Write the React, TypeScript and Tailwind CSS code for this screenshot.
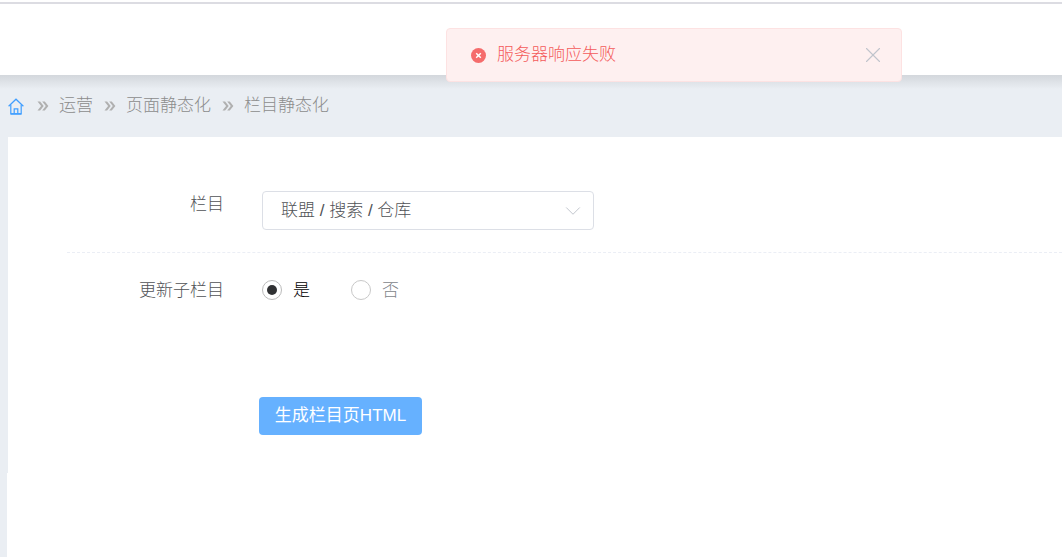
import { ChevronDown, X } from "lucide-react";

const FONT = "font-['Liberation_Sans','Noto_Sans_CJK_SC',sans-serif]";

function HomeIcon() {
  return (
    <svg className="w-[16px] h-[17px] text-[#409eff]" viewBox="0 0 16 17" fill="none" stroke="currentColor" strokeWidth={1.2}>
      <path d="M0.6 8.2 8 1.2l7.4 7" />
      <path d="M2.8 6.8v9h10.4v-9" />
      <path d="M6.2 15.5v-4.7h3.6v4.7" />
      <path d="M2.8 15.9h10.4" strokeWidth={1.4} />
    </svg>
  );
}

function Sep() {
  return (
    <svg className="block w-[12px] h-[10px] text-[#b0b0b0]" viewBox="0 0 12 10" fill="currentColor">
      <path d="M0.5 0.5h2.6L6.7 5 3.1 9.5H0.5L4.1 5z" />
      <path d="M5.2 0.5h2.6L11.4 5 7.8 9.5H5.2L8.8 5z" />
    </svg>
  );
}

function Toast() {
  return (
    <div className="absolute left-[446px] top-[28px] w-[456px] h-[54px] flex items-center pl-[24px] pr-[20px] bg-[#fef0f0] border border-[#fde2e2] rounded-[4px]">
      <svg className="w-[15px] h-[15px] shrink-0" viewBox="0 0 15 15">
        <circle cx="7.5" cy="7.5" r="7.5" fill="#f56c6c" />
        <path d="M5.2 5.2l4.6 4.6M9.8 5.2l-4.6 4.6" stroke="#fff" strokeWidth={1.5} />
      </svg>
      <span className="ml-[11px] text-[17px] font-light text-[#f45a5a]">服务器响应失败</span>
      <X className="ml-auto w-[26px] h-[26px] -mr-[5px] text-[#c0c4cc]" strokeWidth={1} />
    </div>
  );
}

export default function App() {
  return (
    <div className={`${FONT} relative h-[557px] w-[1062px] overflow-hidden flex flex-col bg-[#eaeef3]`}>
      {/* top header */}
      <div className="h-[75px] shrink-0 bg-white pt-[2px]">
        <div className="h-[2px] bg-[#dcdce2]" />
      </div>
      <div className="h-[14px] -mb-[14px] bg-gradient-to-b from-[#d3d7dc] to-[#eaeef3]" />

      {/* breadcrumb */}
      <div className="h-[62px] shrink-0 flex items-center pl-[8px] text-[17px] font-light text-[#8c8c8c] relative">
        <HomeIcon />
        <span className="ml-[13px]"><Sep /></span>
        <span className="ml-[10px]">运营</span>
        <span className="ml-[11px]"><Sep /></span>
        <span className="ml-[10px]">页面静态化</span>
        <span className="ml-[11px]"><Sep /></span>
        <span className="ml-[10px]">栏目静态化</span>
      </div>

      {/* form card */}
      <div className="ml-[8px] h-[336px] shrink-0 bg-white pt-[54px] font-light">
        <div className="flex items-start h-[62px] border-b border-dashed border-[#ebeef5] ml-[59px]">
          <label className="w-[157px] text-right text-[17px] text-[#505256] leading-[28px]">栏目</label>
          <div className="ml-[38px] w-[332px] h-[39px] flex items-center justify-between pl-[18px] pr-[7px] border border-[#dcdfe6] rounded-[4px] text-[17px] text-[#505256]">
            <span>联盟 / 搜索 / 仓库</span>
            <ChevronDown className="w-[26px] h-[26px] text-[#c0c4cc]" strokeWidth={0.9} />
          </div>
        </div>

        <div className="flex items-center h-[74px] ml-[59px]">
          <label className="w-[157px] text-right text-[17px] text-[#505256] leading-[28px] translate-y-px">更新子栏目</label>
          <div className="ml-[38px] flex items-center">
            <span className="w-[20px] h-[20px] rounded-full border border-[#bbbbbb] flex items-center justify-center">
              <span className="w-[10px] h-[10px] rounded-full bg-[#303133]" />
            </span>
            <span className="ml-[11px] text-[17px] text-black translate-y-px">是</span>
            <span className="ml-[41px] w-[20px] h-[20px] rounded-full border border-[#c8c8c8]" />
            <span className="ml-[11px] text-[17px] text-[#82858a] translate-y-px">否</span>
          </div>
        </div>

        <button className="block ml-[251px] mt-[70px] w-[163px] h-[38px] rounded-[4px] bg-[#66b1ff] text-white font-normal text-[17px]">
          生成栏目页HTML
        </button>
      </div>
      <div className="ml-[7px] flex-1 bg-white" />

      <Toast />
    </div>
  );
}
